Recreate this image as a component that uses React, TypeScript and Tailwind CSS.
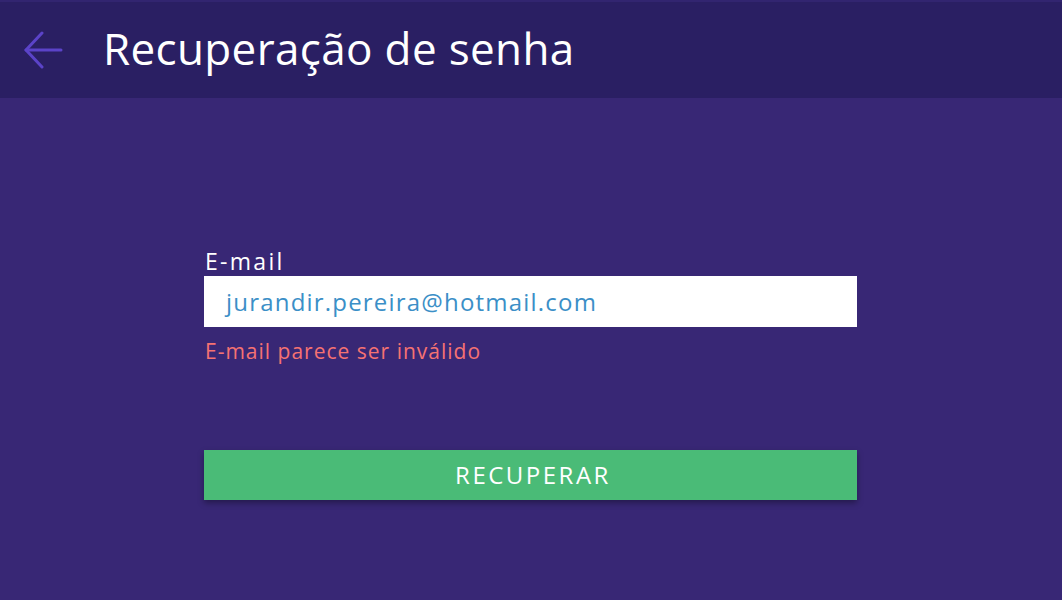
import React from "react";

export default function App() {
  return (
    <div className="w-[1062px] h-[600px] bg-[#382775] flex flex-col" style={{ fontFamily: "'Open Sans', sans-serif" }}>
      <header className="h-[98px] bg-[#2a1f63] border-t-2 border-[#322570] flex items-center shrink-0">
        <div className="w-[103px] flex items-center pl-[23px]">
          <svg width="40" height="38" viewBox="0 0 40 38" fill="none" stroke="#5b43c8" strokeWidth="3" strokeLinecap="round" strokeLinejoin="round">
            <path d="M38 19H3" />
            <path d="M19 2L3 19l16 17" />
          </svg>
        </div>
        <h1 className="text-white text-[44px] font-medium tracking-[0.35px] leading-none -mt-[4px]">Recuperação de senha</h1>
      </header>
      <main className="flex-1 flex flex-col pl-[204px] pt-[148px]">
        <div className="w-[653px] flex flex-col">
          <label className="text-white text-[23px] font-medium tracking-[2.3px] leading-[30px] pl-[1px]">E-mail</label>
          <div className="h-[51px] bg-white flex items-center px-[22px]">
            <span className="text-[#3b8fc7] text-[24px] font-medium tracking-[1.2px]">jurandir.pereira@hotmail.com</span>
          </div>
          <p className="text-[#f57272] text-[21px] font-medium tracking-[1px] mt-[10px] pl-[1px] leading-[28px]">E-mail parece ser inválido</p>
          <button className="mt-[85px] h-[50px] bg-[#4abb77] text-white text-[24px] font-medium tracking-[2.5px] pl-[5px] shadow-[0_3px_6px_rgba(0,0,0,0.35)] flex items-center justify-center">
            RECUPERAR
          </button>
        </div>
      </main>
    </div>
  );
}
